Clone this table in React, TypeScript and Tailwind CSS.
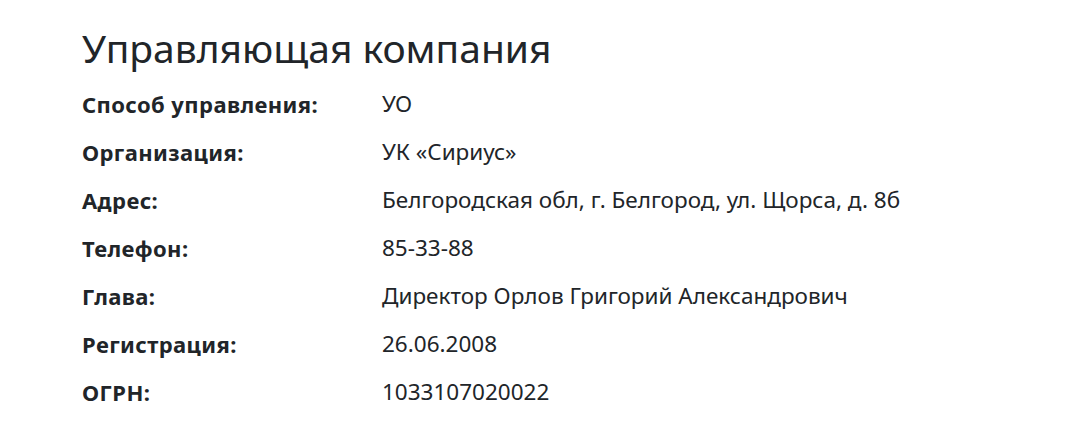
import { Fragment } from "react";

const rows: [string, string][] = [
  ["Способ управления:", "УО"],
  ["Организация:", "УК «Сириус»"],
  ["Адрес:", "Белгородская обл, г. Белгород, ул. Щорса, д. 8б"],
  ["Телефон:", "85-33-88"],
  ["Глава:", "Директор Орлов Григорий Александрович"],
  ["Регистрация:", "26.06.2008"],
  ["ОГРН:", "1033107020022"],
];

export default function App() {
  return (
    <div className="min-h-screen bg-white text-[#212529] font-['Noto_Sans',sans-serif]">
      <div className="pl-[82px] pt-[20px]">
        <h1 className="text-[39px] leading-[56px] font-normal">Управляющая компания</h1>
        <div className="mt-[4px] grid grid-cols-[300px_1fr] auto-rows-[48px] items-center text-[22px]">
          {rows.map(([label, value]) => (
            <Fragment key={label}>
              <div className="font-bold tracking-[0.4px]">{label}</div>
              <div className="text-[22.5px]">{value}</div>
            </Fragment>
          ))}
        </div>
      </div>
    </div>
  );
}
